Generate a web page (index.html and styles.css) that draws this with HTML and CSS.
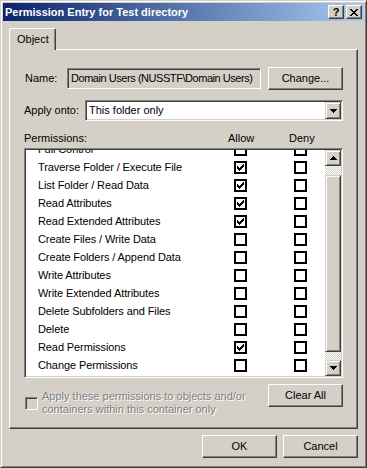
FILE: index.html
```html
<!DOCTYPE html>
<html lang="en">
<head>
    <meta charset="UTF-8">
    <title>Permission Entry for Test directory</title>
    <link rel="stylesheet" href="styles.css">
</head>
<body>
    <div class="window">
        <div class="titlebar">
            <span class="title">Permission Entry for Test directory</span>
            <button class="cap help">?</button>
            <button class="cap close">
                <svg width="8" height="7" viewBox="0 0 8 7" shape-rendering="crispEdges"><path d="M0 0h2v1h-2zM6 0h2v1h-2zM1 1h2v1h-2zM5 1h2v1h-2zM2 2h4v1h-4zM3 3h2v1h-2zM2 4h4v1h-4zM1 5h2v1h-2zM5 5h2v1h-2zM0 6h2v1h-2zM6 6h2v1h-2z"/></svg>
            </button>
        </div>

        <div class="client">
            <div class="tabs">
                <div class="tab">Object</div>
            </div>

            <div class="panel">
                <div class="name-row">
                    <span class="lbl name-lbl">Name:</span>
                    <div class="field">Domain Users (NUSSTF\Domain Users)</div>
                    <button class="btn">Change...</button>
                </div>

                <div class="apply-row">
                    <span class="lbl apply-lbl">Apply onto:</span>
                    <div class="combo">
                        <span>This folder only</span>
                        <span class="drop">
                            <svg width="7" height="4" viewBox="0 0 7 4" shape-rendering="crispEdges"><path d="M0 0h7v1h-7zM1 1h5v1h-5zM2 2h3v1h-3zM3 3h1v1h-1z"/></svg>
                        </span>
                    </div>
                </div>

                <div class="perm-head">
                    <span>Permissions:</span>
                    <span>Allow</span>
                    <span>Deny</span>
                </div>

                <div class="list">
                    <div class="items">
                        <div class="items-inner">
                            <div class="row"><span>Full Control</span><span class="cb"></span><span></span><span class="cb"></span></div>
                            <div class="row"><span>Traverse Folder / Execute File</span><span class="cb"><svg width="9" height="9" viewBox="0 0 9 9" shape-rendering="crispEdges"><path d="M7 1h1v1h-1zM6 2h2v1h-2zM1 3h1v1h-1zM5 3h3v1h-3zM1 4h2v1h-2zM4 4h3v1h-3zM1 5h5v1h-5zM2 6h3v1h-3zM3 7h1v1h-1z"/></svg></span><span></span><span class="cb"></span></div>
                            <div class="row"><span>List Folder / Read Data</span><span class="cb"><svg width="9" height="9" viewBox="0 0 9 9" shape-rendering="crispEdges"><path d="M7 1h1v1h-1zM6 2h2v1h-2zM1 3h1v1h-1zM5 3h3v1h-3zM1 4h2v1h-2zM4 4h3v1h-3zM1 5h5v1h-5zM2 6h3v1h-3zM3 7h1v1h-1z"/></svg></span><span></span><span class="cb"></span></div>
                            <div class="row"><span>Read Attributes</span><span class="cb"><svg width="9" height="9" viewBox="0 0 9 9" shape-rendering="crispEdges"><path d="M7 1h1v1h-1zM6 2h2v1h-2zM1 3h1v1h-1zM5 3h3v1h-3zM1 4h2v1h-2zM4 4h3v1h-3zM1 5h5v1h-5zM2 6h3v1h-3zM3 7h1v1h-1z"/></svg></span><span></span><span class="cb"></span></div>
                            <div class="row"><span>Read Extended Attributes</span><span class="cb"><svg width="9" height="9" viewBox="0 0 9 9" shape-rendering="crispEdges"><path d="M7 1h1v1h-1zM6 2h2v1h-2zM1 3h1v1h-1zM5 3h3v1h-3zM1 4h2v1h-2zM4 4h3v1h-3zM1 5h5v1h-5zM2 6h3v1h-3zM3 7h1v1h-1z"/></svg></span><span></span><span class="cb"></span></div>
                            <div class="row"><span>Create Files / Write Data</span><span class="cb"></span><span></span><span class="cb"></span></div>
                            <div class="row"><span>Create Folders / Append Data</span><span class="cb"></span><span></span><span class="cb"></span></div>
                            <div class="row"><span>Write Attributes</span><span class="cb"></span><span></span><span class="cb"></span></div>
                            <div class="row"><span>Write Extended Attributes</span><span class="cb"></span><span></span><span class="cb"></span></div>
                            <div class="row"><span>Delete Subfolders and Files</span><span class="cb"></span><span></span><span class="cb"></span></div>
                            <div class="row"><span>Delete</span><span class="cb"></span><span></span><span class="cb"></span></div>
                            <div class="row"><span>Read Permissions</span><span class="cb"><svg width="9" height="9" viewBox="0 0 9 9" shape-rendering="crispEdges"><path d="M7 1h1v1h-1zM6 2h2v1h-2zM1 3h1v1h-1zM5 3h3v1h-3zM1 4h2v1h-2zM4 4h3v1h-3zM1 5h5v1h-5zM2 6h3v1h-3zM3 7h1v1h-1z"/></svg></span><span></span><span class="cb"></span></div>
                            <div class="row"><span>Change Permissions</span><span class="cb"></span><span></span><span class="cb"></span></div>
                        </div>
                    </div>
                    <div class="vscroll">
                        <span class="sbtn">
                            <svg width="7" height="4" viewBox="0 0 7 4" shape-rendering="crispEdges"><path d="M3 0h1v1h-1zM2 1h3v1h-3zM1 2h5v1h-5zM0 3h7v1h-7z"/></svg>
                        </span>
                        <span class="track top-track"></span>
                        <span class="thumb"></span>
                        <span class="track"></span>
                        <span class="sbtn">
                            <svg width="7" height="4" viewBox="0 0 7 4" shape-rendering="crispEdges"><path d="M0 0h7v1h-7zM1 1h5v1h-5zM2 2h3v1h-3zM3 3h1v1h-1z"/></svg>
                        </span>
                    </div>
                </div>

                <div class="bottom-row">
                    <div class="inherit">
                        <span class="cb-off"></span>
                        <span class="inherit-text">Apply these permissions to objects and/or<br>containers within this container only</span>
                    </div>
                    <button class="btn">Clear All</button>
                </div>
            </div>

            <div class="footer">
                <button class="btn">OK</button>
                <button class="btn">Cancel</button>
            </div>
        </div>
    </div>
</body>
</html>
```

FILE: styles.css
```css
* {
    box-sizing: border-box;
}
body {
    margin: 0;
    background: #d4d0c8;
    font-family: "Liberation Sans", Arial, sans-serif;
    font-size: 11px;
    line-height: 13px;
    color: #000;
}
.window {
    width: 367px;
    height: 468px;
    padding: 2px;
    border: 1px solid;
    border-color: #d4d0c8 #404040 #404040 #d4d0c8;
    box-shadow: inset 1px 1px #fff, inset -1px -1px #808080;
    background: #d4d0c8;
    display: flex;
    flex-direction: column;
}

/* caption */
.titlebar {
    height: 18px;
    display: flex;
    align-items: center;
    padding: 0 2px;
    background: linear-gradient(to right, #0a246a, #a6caf0);
}
.title {
    flex: 1;
    color: #fff;
    font-weight: bold;
    white-space: nowrap;
}
.cap {
    width: 16px;
    height: 14px;
    padding: 0;
    border: 1px solid;
    border-color: #fff #404040 #404040 #fff;
    box-shadow: inset -1px -1px #808080;
    background: #d4d0c8;
    display: flex;
    align-items: center;
    justify-content: center;
}
.help {
    margin-right: 2px;
    font: bold 11px/12px "Liberation Sans", Arial, sans-serif;
}

/* body */
.client {
    flex: 1;
    padding: 7px 6px 0;
    display: flex;
    flex-direction: column;
}
.tabs {
    display: flex;
    height: 21px;
}
.tab {
    position: relative;
    z-index: 1;
    width: 47px;
    height: 22px;
    padding: 4px 0 0 7px;
    border: 1px solid;
    border-bottom: none;
    border-color: #fff #404040 transparent #fff;
    border-radius: 2px 2px 0 0;
    box-shadow: inset -1px 0 #808080;
    background: #d4d0c8;
}
.panel {
    height: 380px;
    padding: 0 14px;
    border: 1px solid;
    border-color: #fff #404040 #404040 #fff;
    box-shadow: inset -1px -1px #808080;
    display: flex;
    flex-direction: column;
}
.btn {
    width: 75px;
    height: 23px;
    padding: 0;
    border: 1px solid;
    border-color: #fff #404040 #404040 #fff;
    box-shadow: inset -1px -1px #808080;
    background: #d4d0c8;
    font: inherit;
    color: #000;
}
.lbl {
    white-space: nowrap;
}

.name-row {
    margin-top: 17px;
    height: 23px;
    display: flex;
    align-items: center;
}
.name-lbl {
    width: 43px;
    padding-left: 1px;
}
.field {
    width: 194px;
    height: 21px;
    margin-right: 7px;
    border: 1px solid;
    border-color: #808080 #fff #fff #808080;
    box-shadow: inset 1px 1px #404040, inset -1px -1px #d4d0c8;
    background: #d4d0c8;
    display: flex;
    align-items: center;
    white-space: nowrap;
    overflow: hidden;
    letter-spacing: -0.45px;
}
.field, .combo {
    padding-left: 3px;
}

.apply-row {
    margin-top: 10px;
    height: 21px;
    display: flex;
    align-items: center;
}
.apply-lbl {
    width: 61px;
}
.combo {
    width: 258px;
    height: 21px;
    padding-right: 1px;
    border: 1px solid;
    border-color: #808080 #fff #fff #808080;
    box-shadow: inset 1px 1px #404040, inset -1px -1px #d4d0c8;
    background: #fff;
    display: flex;
    align-items: center;
}
.drop, .sbtn {
    width: 16px;
    border: 1px solid;
    border-color: #d4d0c8 #404040 #404040 #d4d0c8;
    box-shadow: inset 1px 1px #fff, inset -1px -1px #808080;
    background: #d4d0c8;
    display: flex;
    align-items: center;
    justify-content: center;
}
.drop {
    height: 17px;
    margin-left: auto;
}

.perm-head {
    margin-top: 11px;
    display: grid;
    grid-template-columns: 204px 61px auto;
}

.list {
    margin-top: 3px;
    height: 230px;
    border: 1px solid;
    border-color: #808080 #fff #fff #808080;
    box-shadow: inset 1px 1px #404040, inset -1px -1px #d4d0c8;
    padding: 1px;
    background: #fff;
    display: flex;
}
.items {
    flex: 1;
    overflow: hidden;
}
.items-inner {
    margin-top: -10px;
}
.row {
    height: 18px;
    padding-left: 12px;
    display: grid;
    grid-template-columns: 196px 13px 47px 13px;
    align-items: center;
    white-space: nowrap;
    letter-spacing: -0.1px;
}
.cb {
    width: 13px;
    height: 13px;
    border: 2px solid #000;
    background: #fff;
}
.cb svg {
    display: block;
}

.vscroll {
    width: 16px;
    display: flex;
    flex-direction: column;
}
.sbtn {
    height: 16px;
    flex: none;
}
.track {
    flex: 1;
    background: repeating-conic-gradient(#fff 0 25%, #d4d0c8 0 50%) 0 0 / 2px 2px;
}
.top-track {
    flex: none;
    height: 9px;
}
.thumb {
    height: 177px;
    border: 1px solid;
    border-color: #d4d0c8 #404040 #404040 #d4d0c8;
    box-shadow: inset 1px 1px #fff, inset -1px -1px #808080;
    background: #d4d0c8;
}

.bottom-row {
    margin-top: 6px;
    display: flex;
    justify-content: space-between;
    align-items: flex-start;
}
.inherit {
    margin-top: 6px;
    padding-left: 1px;
    display: flex;
    align-items: center;
    gap: 4px;
}
.cb-off {
    width: 13px;
    height: 13px;
    border: 1px solid;
    border-color: #808080 #fff #fff #808080;
    box-shadow: inset 1px 1px #404040, inset -1px -1px #d4d0c8;
}
.inherit-text {
    color: #808080;
    text-shadow: 1px 1px #fff;
}

.footer {
    margin-top: 6px;
    display: flex;
    justify-content: flex-end;
    gap: 6px;
}
```
